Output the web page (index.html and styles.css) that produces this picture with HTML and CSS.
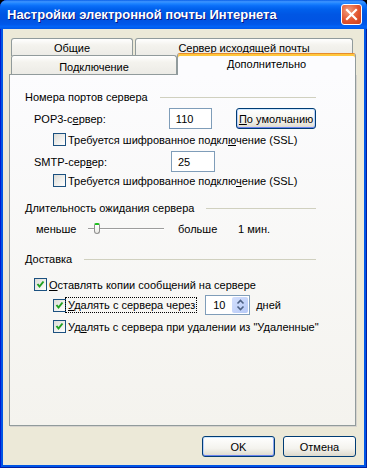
FILE: index.html
```html
<!DOCTYPE html>
<html lang="ru">
<head>
  <meta charset="UTF-8">
  <meta name="viewport" content="width=device-width, initial-scale=1.0">
  <title>Настройки электронной почты Интернета</title>
  <link rel="stylesheet" href="styles.css">
</head>
<body>

<div class="window">
  <div class="titlebar">
    <span class="title">Настройки электронной почты Интернета</span>
    <span class="close">
      <svg width="13" height="13" viewBox="0 0 13 13"><path d="M2 2 L11 11 M11 2 L2 11" stroke="#fff" stroke-width="2.2" stroke-linecap="square"/></svg>
    </span>
  </div>

  <div class="client">
    <div class="tab-row back">
      <div class="tab t-general">Общие</div>
      <div class="tab t-smtp">Сервер исходящей почты</div>
    </div>
    <div class="tab-row front">
      <div class="tab t-conn">Подключение</div>
      <div class="tab active">Дополнительно</div>
    </div>

    <div class="panel">
      <div class="group-title g-ports"><span>Номера портов сервера</span><i class="rule"></i></div>

      <div class="field-row r-pop">
        <span class="field-label">POP3-с<u>е</u>рвер:</span>
        <span class="textbox">110</span>
        <span class="btn btn-default-port"><u>П</u>о умолчанию</span>
      </div>
      <div class="check-row r-ssl1">
        <span class="check"></span>
        <span>Требуется шифрованное подкл<u>ю</u>чение (SSL)</span>
      </div>

      <div class="field-row r-smtp">
        <span class="field-label">SMTP-сер<u>в</u>ер:</span>
        <span class="textbox">25</span>
      </div>
      <div class="check-row r-ssl2">
        <span class="check"></span>
        <span>Требуется шифрованное подклю<u>ч</u>ение (SSL)</span>
      </div>

      <div class="group-title g-timeout"><span><u>Д</u>лительность ожидания сервера</span><i class="rule"></i></div>

      <div class="slider-row">
        <span class="s-less">меньше</span>
        <span class="slider">
          <i class="track"></i>
          <i class="thumb"></i>
        </span>
        <span class="s-more">больше</span>
        <span>1 мин.</span>
      </div>

      <div class="group-title g-delivery"><span>Доставка</span><i class="rule"></i></div>

      <div class="check-row top-level r-keep">
        <span class="check checked"></span>
        <span><u>О</u>ставлять копии сообщений на сервере</span>
      </div>
      <div class="check-row r-days">
        <span class="check checked"></span>
        <span class="focused"><u>У</u>далять с сервера через</span>
        <span class="spinner">
          <span class="spin-value">10</span>
          <span class="spin-btns">
            <svg width="15" height="16" viewBox="0 0 15 16"><path d="M4.5 6.5 L7.5 3.5 L10.5 6.5 M4.5 9.5 L7.5 12.5 L10.5 9.5" fill="none" stroke="#4d6185" stroke-width="1.6"/></svg>
          </span>
        </span>
        <span class="days">дней</span>
      </div>
      <div class="check-row r-deleted">
        <span class="check checked"></span>
        <span>Уд<u>а</u>лять с сервера при удалении из "Удаленные"</span>
      </div>
    </div>

    <div class="dialog-buttons">
      <span class="btn default">OK</span>
      <span class="btn">Отмена</span>
    </div>
  </div>
</div>

</body>
</html>
```

FILE: styles.css
```css
html {
  background: #000;
}

body {
  margin: 0;
  font-family: "Liberation Sans", Arial, sans-serif;
  font-size: 11px;
  color: #000;
  white-space: nowrap;
}

u {
  text-decoration: underline;
  text-underline-offset: 1px;
}

.window {
  width: 367px;
  height: 468px;
  display: flex;
  flex-direction: column;
  background: #0055e5;
  border-radius: 7px 7px 0 0;
  box-shadow: inset 1px 0 #0019cf, inset -1px 0 #001ea0, inset 0 -1px #001ea0;
}

/* title bar */
.titlebar {
  height: 29px;
  display: flex;
  align-items: center;
  justify-content: space-between;
  padding: 0 5px 0 7px;
  border-radius: 7px 7px 0 0;
  background: linear-gradient(#0a5fe8 0%, #3d95ff 6%, #1e84ff 12%, #0a6ef8 20%, #0060ec 32%, #0056e4 50%, #0054e3 70%, #0058ea 84%, #0264f8 92%, #0058e8 100%);
}

.title {
  color: #fff;
  font-weight: bold;
  font-size: 13px;
  text-shadow: 1px 1px #0a1883;
}

.close {
  width: 21px;
  height: 21px;
  box-sizing: border-box;
  border: 1px solid #fff;
  border-radius: 3px;
  background: radial-gradient(circle at 35% 30%, #f09f80, #e2542e 55%, #c8401e);
  display: flex;
  align-items: center;
  justify-content: center;
}

/* dialog body */
.client {
  flex: 1;
  margin: 0 3px 3px;
  background: #ece9d8;
  padding: 9px 8px 0 6px;
}

.tab-row {
  display: flex;
  padding-left: 2px;
}

.tab {
  box-sizing: border-box;
  border: 1px solid #919b9c;
  border-bottom: none;
  border-radius: 3px 3px 0 0;
  background: linear-gradient(#ffffff, #f4f3ee 35%, #ecebe6);
  text-align: center;
}

.back {
  gap: 2px;
}

.back .tab {
  height: 18px;
  padding-top: 3px;
}

.t-general { width: 122px; }
.t-smtp { width: 218px; }

.front {
  margin-top: -1px;
  align-items: flex-start;
}

.t-conn {
  width: 166px;
  height: 19px;
  padding-top: 5px;
}

.tab.active {
  width: 179px;
  height: 22px;
  margin-top: -2px;
  margin-bottom: -1px;
  padding-top: 4px;
  position: relative;
  z-index: 1;
  background: #fcfcfe;
  border-top: 1px solid #e68b2c;
  box-shadow: inset 0 2px 0 #ffc73c;
}

.panel {
  height: 352px;
  box-sizing: border-box;
  border: 1px solid #919b9c;
  background: linear-gradient(#fcfcfe, #f4f3ee);
  box-shadow: 1px 1px 0 #d6d3ce;
  padding: 15px 39px 0 15px;
  display: flex;
  flex-direction: column;
}

.group-title {
  height: 14px;
  display: flex;
  align-items: center;
}

.rule {
  flex: 1;
  height: 1px;
  margin-left: 12px;
  background: #d0d0bf;
}

.field-row {
  height: 21px;
  display: flex;
  align-items: center;
  padding-left: 9px;
}

.field-label {
  width: 137px;
}

.textbox {
  width: 44px;
  height: 21px;
  box-sizing: border-box;
  border: 1px solid #7f9db9;
  background: #fff;
  padding-left: 6px;
  display: flex;
  align-items: center;
}

.btn {
  box-sizing: border-box;
  height: 21px;
  border: 1px solid #003c74;
  border-radius: 3px;
  background: linear-gradient(#ffffff, #f4f3ee 60%, #dcd8cc);
  display: flex;
  align-items: center;
  justify-content: center;
}

.btn-default-port {
  width: 81px;
  margin-left: 24px;
  box-shadow: inset 0 1px #cee7ff, inset 0 -1px #6982ee, inset 1px 0 #b8d0fb, inset -1px 0 #b8d0fb;
}

.check-row {
  display: flex;
  align-items: center;
  padding-left: 28px;
  height: 13px;
}

.check-row.top-level {
  padding-left: 9px;
}

.check {
  width: 13px;
  height: 13px;
  box-sizing: border-box;
  border: 1px solid #1c5180;
  background: linear-gradient(135deg, #dcdcd7, #ffffff);
  margin-right: 2px;
  flex-shrink: 0;
}

.check.checked {
  background: url("data:image/svg+xml,%3Csvg xmlns='http://www.w3.org/2000/svg' width='11' height='11'%3E%3Cpath d='M2.5 5 L4.5 7.5 L8.5 2.5' fill='none' stroke='%2321a121' stroke-width='2'/%3E%3C/svg%3E") no-repeat center, linear-gradient(135deg, #dcdcd7, #ffffff);
}

.r-pop { margin-top: 4px; }
.r-ssl1 { margin-top: 4px; }
.r-smtp { margin-top: 5px; }
.r-ssl2 { margin-top: 2px; }
.g-timeout { margin-top: 14px; }
.g-delivery { margin-top: 15px; }
.r-keep { margin-top: 12px; }
.r-days { margin-top: 4px; height: 20px; }
.r-deleted { margin-top: 5px; }

/* slider */
.slider-row {
  margin-top: 6px;
  height: 16px;
  display: flex;
  align-items: center;
  padding-left: 11px;
}

.s-less { width: 52px; }

.slider {
  width: 76px;
  height: 16px;
  position: relative;
}

.track {
  position: absolute;
  left: 0;
  right: 0;
  top: 7px;
  height: 1px;
  background: #9d9d9d;
  border-bottom: 1px solid #fff;
}

.thumb {
  position: absolute;
  left: 6px;
  top: 2px;
  width: 6px;
  height: 11px;
  box-sizing: border-box;
  border: 1px solid #8f8f8f;
  border-top: 2px solid #21c121;
  border-radius: 2px 2px 3px 3px;
  background: linear-gradient(#ffffff, #ecebe6);
}

.s-more {
  margin-left: 14px;
  width: 60px;
}

/* days spinner */
.focused {
  outline: 1px dotted #000;
  outline-offset: 1px;
  margin-left: -1px;
  padding-left: 1px;
}

.spinner {
  margin-left: 10px;
  width: 45px;
  height: 20px;
  box-sizing: border-box;
  border: 1px solid #7f9db9;
  background: #fff;
  display: flex;
  align-items: center;
  justify-content: space-between;
  padding: 1px;
}

.spin-value {
  padding-left: 6px;
}

.spin-btns {
  width: 16px;
  height: 16px;
  border-radius: 2px;
  background: linear-gradient(135deg, #d4e0fd, #b6c9f7);
  display: flex;
  align-items: center;
  justify-content: center;
}

.days {
  margin-left: 6px;
}

/* bottom buttons */
.dialog-buttons {
  margin-top: 10px;
  display: flex;
  justify-content: flex-end;
  gap: 8px;
}

.dialog-buttons .btn {
  width: 73px;
}

.btn.default {
  box-shadow: inset 0 1px #cee7ff, inset 0 -1px #6982ee, inset 1px 0 #b8d0fb, inset -1px 0 #8da4ee;
}
```
